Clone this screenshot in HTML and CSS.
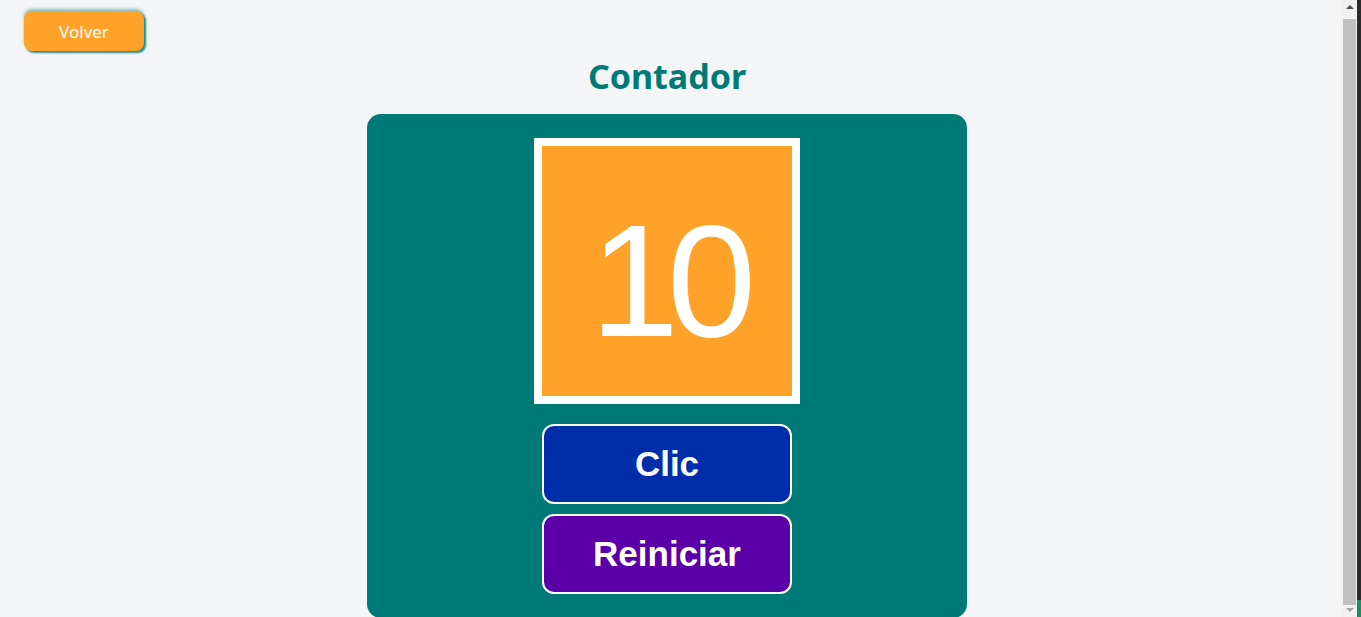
FILE: index.html
```html
<!DOCTYPE html>
<html lang="es">
<head>
<meta charset="utf-8">
<title>Contador</title>
<link rel="stylesheet" href="styles.css">
</head>
<body>
<header class="topbar">
  <button class="back-btn" type="button">Volver</button>
</header>
<main class="page">
  <h1 class="title">Contador</h1>
  <section class="card">
    <div class="display"><span class="count">10</span></div>
    <div class="actions">
      <button class="btn btn-clic" type="button">Clic</button>
      <button class="btn btn-reset" type="button">Reiniciar</button>
    </div>
  </section>
</main>
<div class="scrollbar" aria-hidden="true">
  <div class="sb-track">
    <span class="sb-arrow sb-up"></span>
    <span class="sb-thumb"></span>
    <span class="sb-arrow sb-down"></span>
  </div>
  <div class="sb-edge"><span class="sb-edge-green"></span></div>
</div>
</body>
</html>
```
FILE: styles.css
```css
* { box-sizing: border-box; }
html, body {
  margin: 0;
  padding: 0;
}
body {
  background: #f4f5f7;
  font-family: "Noto Sans", "Open Sans", sans-serif;
}
.topbar {
  padding: 11px 24px 0;
  display: flex;
}
.back-btn {
  width: 120px;
  height: 40px;
  border: none;
  border-radius: 8px;
  background: #ffa22a;
  color: #ffffff;
  font-family: "Noto Sans", sans-serif;
  font-size: 17px;
  cursor: pointer;
  box-shadow: 2px 2px 2px rgba(0, 122, 118, 0.85), 0 -2px 3px rgba(0, 122, 118, 0.45);
}
.page {
  display: flex;
  flex-direction: column;
  align-items: center;
  padding: 0 27px 30px 0;
}
.title {
  margin: 0;
  height: 63px;
  line-height: 50px;
  font-size: 34px;
  font-weight: 700;
  color: #007a76;
}
.card {
  width: 600px;
  background: #007a76;
  border-radius: 14px;
  padding: 24px 0 24px;
  display: flex;
  flex-direction: column;
  align-items: center;
  gap: 20px;
}
.display {
  width: 266px;
  height: 266px;
  border: 8px solid #ffffff;
  background: #ffa22a;
  display: flex;
  align-items: center;
  justify-content: center;
  padding-top: 20px;
}
.count {
  font-family: "Liberation Sans", Arial, sans-serif;
  font-size: 160px;
  letter-spacing: -12px;
  color: #ffffff;
  line-height: 1;
}
.actions {
  display: flex;
  flex-direction: column;
  gap: 10px;
}
.btn {
  width: 250px;
  height: 80px;
  border: 2px solid #ffffff;
  border-radius: 12px;
  color: #ffffff;
  font-family: "Liberation Sans", Arial, sans-serif;
  font-weight: 700;
  font-size: 35px;
  cursor: pointer;
}
.btn-clic { background: #002daa; }
.btn-reset { background: #5b00a8; }

/* simulated browser scrollbar */
.scrollbar {
  position: fixed;
  top: 0;
  right: 0;
  bottom: 0;
  display: flex;
}
.sb-track {
  width: 15px;
  background: #f1f1f1;
  display: flex;
  flex-direction: column;
  align-items: center;
}
.sb-arrow {
  width: 0;
  height: 0;
  border-left: 4px solid transparent;
  border-right: 4px solid transparent;
  margin: 5px 0 10px;
}
.sb-up { border-bottom: 4px solid #505050; }
.sb-down { border-top: 4px solid #a3a3a3; margin: 3px 0 5px; }
.sb-thumb {
  flex: 1;
  width: 13px;
  background: #c1c1c1;
}
.sb-edge {
  width: 4px;
  background: #2b2b2b;
  display: flex;
  flex-direction: column;
  justify-content: flex-end;
}
.sb-edge-green {
  height: 17px;
  background: #1c8f5e;
}
```
